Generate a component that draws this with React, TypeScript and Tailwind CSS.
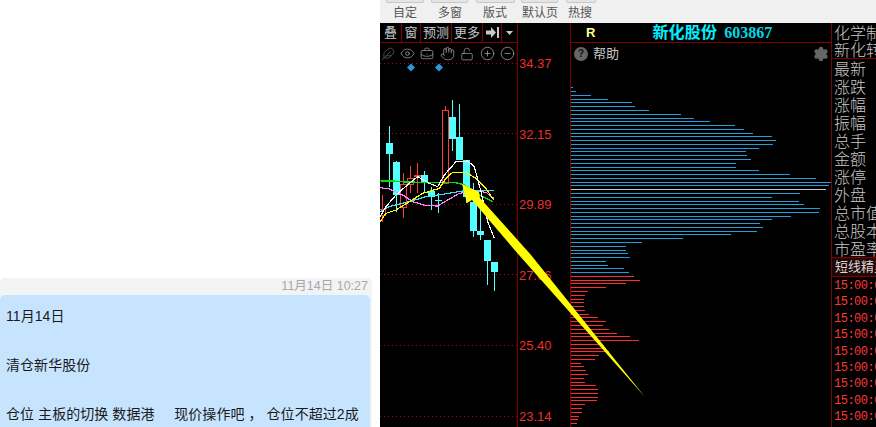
import { Feather, Eye, BriefcaseBusiness, Hand, LockOpen, CirclePlus, CircleMinus, Settings } from 'lucide-react'

const CJK = "font-['Liberation_Sans','Noto_Sans_CJK_SC',sans-serif]"

type Candle = [number, number, number, number, number, 'c' | 'r' | 'f']

// all chart numbers below were read off a 3x crop, z() maps them back to page pixels
const zx = (x: number) => x / 3 + 376
const zy = (y: number) => y / 3 + 95
const pts = (list: number[][]) => list.map(([x, y]) => `${zx(x)},${zy(y)}`).join(' ')

const CANDLES: Candle[] = [
  [17, 300, 380, 343, 362, 'r'],
  [40, 93, 275, 144, 176, 'c'],
  [61, 198, 350, 201, 300, 'c'],
  [82, 235, 368, 268, 338, 'r'],
  [103, 213, 293, 250, 268, 'r'],
  [124, 205, 293, 240, 245, 'f'],
  [145, 228, 295, 240, 265, 'c'],
  [166, 275, 345, 287, 305, 'c'],
  [187, 295, 353, 315, 318, 'c'],
  [208, 33, 268, 45, 265, 'r'],
  [229, 15, 168, 66, 132, 'c'],
  [250, 27, 195, 126, 195, 'c'],
  [271, 195, 325, 195, 305, 'c'],
  [292, 265, 425, 320, 408, 'c'],
  [313, 340, 435, 408, 420, 'c'],
  [334, 435, 570, 435, 498, 'c'],
  [355, 500, 588, 501, 531, 'c'],
]

const LINES: { color: string; p: number[][] }[] = [
  { color: '#ff80ff', p: [[12, 278], [40, 282], [80, 300], [110, 320], [150, 332], [185, 333], [210, 318], [250, 295], [300, 288], [330, 292], [353, 310]] },
  { color: '#00e000', p: [[12, 257], [60, 259], [120, 262], [200, 263], [240, 263], [265, 270], [300, 295], [350, 320]] },
  { color: '#40e0f0', p: [[12, 350], [40, 335], [100, 320], [150, 305], [200, 298], [260, 288], [355, 286]] },
  { color: '#ffff00', p: [[12, 380], [30, 355], [60, 345], [100, 320], [140, 295], [190, 280], [210, 250], [230, 232], [270, 232], [300, 250], [330, 280], [353, 315]] },
  { color: '#ffffff', p: [[12, 365], [30, 335], [60, 300], [100, 265], [125, 245], [160, 265], [185, 275], [205, 240], [240, 200], [275, 198], [295, 215], [315, 290], [335, 380], [355, 430]] },
]

const GRID = [63, 133, 204, 274, 345, 416]
const PRICES = ['34.37', '32.15', '29.89', '27.66', '25.40', '23.14']

// [y in crop, bar end x in crop]
const BLUE = [[22, 21], [34, 30], [46, 75], [58, 126], [67, 198], [79, 207], [91, 249], [103, 345], [115, 384], [124, 432], [136, 507], [148, 534], [160, 561], [169, 618], [181, 630], [193, 621], [205, 579], [214, 540], [226, 543], [238, 555], [250, 510], [262, 510], [271, 579], [283, 672], [295, 750], [307, 795], [316, 789], [328, 780], [340, 702], [352, 618], [364, 699], [373, 714], [385, 762], [397, 759], [409, 675], [418, 618], [430, 582], [442, 591], [454, 573], [463, 495], [475, 351], [487, 228], [499, 180], [511, 180], [520, 186], [532, 192]]
const LOWER_BLUE = [[7, 390], [19, 318], [31, 324], [40, 372], [52, 387]]
const RED = [[64, 402], [76, 420], [85, 378], [97, 318], [109, 264], [121, 255], [133, 252], [142, 252], [154, 252], [166, 255], [178, 267], [187, 294], [199, 318], [211, 309], [223, 327], [235, 351], [244, 390], [256, 417], [268, 309], [280, 312], [289, 327], [301, 297], [313, 285], [325, 243], [334, 252], [346, 258], [358, 264], [370, 252], [382, 255], [391, 288], [403, 294], [415, 294], [427, 294], [436, 291], [448, 255], [460, 246], [472, 246], [484, 237], [493, 234], [505, 231]]

const BARS = [
  ...BLUE.map(([y, x]) => ({ y: Math.round(y / 3 + 80), x1: x / 3 + 566, color: y === 328 ? '#c8c8c8' : '#1f9fd8' })),
  ...LOWER_BLUE.map(([y, x]) => ({ y: Math.round(y / 3 + 255), x1: x / 3 + 500, color: '#1f9fd8' })),
  ...RED.map(([y, x]) => ({ y: Math.round(y / 3 + 255), x1: x / 3 + 500, color: '#ff2d2d' })),
]

const INFO_TOP = ['化学制品', '新化转债']
const INFO = ['最新', '涨跌', '涨幅', '振幅', '总手', '金额', '涨停', '外盘', '总市值', '总股本', '市盈率']

function PlotChart() {
  return (
    <svg className="block w-[137px] h-[364px]" viewBox="380 63 137 364" shapeRendering="crispEdges">
      {GRID.map(y => (
        <line key={y} x1={380} x2={517} y1={y + 0.5} y2={y + 0.5} stroke="#c00000" strokeDasharray="1 3" />
      ))}
      <path d="M411 63.5l4 4-4 4-4-4zM439 63.5l4 4-4 4-4-4z" fill="#2a9ad0" shapeRendering="auto" />
      {CANDLES.map(([x, top, bottom, bodyTop, bodyBottom, kind]) => {
        const cx = Math.round(zx(x)) + 0.5
        const color = kind === 'c' ? '#54ffff' : '#ff3c3c'
        return (
          <g key={x}>
            <line x1={cx} x2={cx} y1={zy(top)} y2={zy(bottom)} stroke={color} />
            {kind === 'r' ? (
              <rect x={cx - 3} y={Math.round(zy(bodyTop)) + 0.5} width={6} height={Math.round((bodyBottom - bodyTop) / 3)} fill="#000" stroke={color} />
            ) : (
              <rect x={cx - 3.5} y={Math.round(zy(bodyTop))} width={7} height={Math.max(1, Math.round((bodyBottom - bodyTop) / 3))} fill={color} />
            )}
          </g>
        )
      })}
      {LINES.map(l => (
        <polyline key={l.color} points={pts(l.p)} fill="none" stroke={l.color} strokeWidth={l.color === '#00e000' ? 1.6 : 1.2} />
      ))}
    </svg>
  )
}

function ProfileBars() {
  return (
    <svg className="block w-[260px] h-[364px]" viewBox="571 63 260 364" shapeRendering="crispEdges">
      {BARS.map((b, i) => (
        <line key={i} x1={571} x2={b.x1} y1={b.y + 0.5} y2={b.y + 0.5} stroke={b.color} />
      ))}
    </svg>
  )
}

function TopStub({ w, ml }: { w: string; ml: string }) {
  return <div className={`h-[3px] ${w} ${ml} bg-[#e4e4e4] border-b border-x border-[#c8c8c8] rounded-b-[2px]`} />
}

export default function App() {
  return (
    <div className={`relative flex w-[876px] h-[427px] overflow-hidden bg-white ${CJK}`}>
      {/* chat column */}
      <div className="w-[380px] shrink-0 flex flex-col justify-end">
        <div className="w-[372px] h-[149px] bg-[#f2f3f5] rounded-t-[5px] pr-[2px] flex flex-col">
          <div className="h-[17px] leading-[17px] text-right text-[12.5px] text-[#a8a8a8] pr-[2px]">11月14日 10:27</div>
          <div className="flex-1 bg-[#c7e4ff] rounded-t-[5px] pl-[6px] pt-[9px] text-[14px] leading-[24.4px] text-[#1a1a1a] whitespace-pre tracking-[0.06px]">
            <p>11月14日</p>
            <p>&nbsp;</p>
            <p>清仓新华股份</p>
            <p>&nbsp;</p>
            <p>仓位 主板的切换 数据港     现价操作吧 ， 仓位不超过2成</p>
          </div>
        </div>
      </div>

      {/* trading software window */}
      <div className="flex-1 flex flex-col min-w-0">
        <div className="h-[23px] bg-[#f0f0f0] relative shrink-0">
          <div className="flex">
            <TopStub w="w-[38px]" ml="ml-[6px]" />
            <TopStub w="w-[37px]" ml="ml-[7px]" />
            <TopStub w="w-[39px]" ml="ml-[8px]" />
            <TopStub w="w-[37px]" ml="ml-[6px]" />
            <TopStub w="w-[30px]" ml="ml-[8px]" />
          </div>
          <div className="flex text-[12px] leading-[16px] text-[#555] pt-[2px]">
            <span className="ml-[13px]">自定</span>
            <span className="ml-[21px]">多窗</span>
            <span className="ml-[21px]">版式</span>
            <span className="ml-[15px]">默认页</span>
            <span className="ml-[10px]">热搜</span>
          </div>
        </div>

        <div className="flex-1 flex bg-black min-h-0">
          <div className="w-[137px] shrink-0 flex flex-col">
            <div className="h-[20px] flex border-b border-[#800000] text-[13px] leading-[19px] text-[#c4c4c4] text-center">
              <span className="w-[22px] border-r border-[#800000]">叠</span>
              <span className="w-[19px] border-r border-[#800000]">窗</span>
              <span className="w-[31px] border-r border-[#800000]">预测</span>
              <span className="w-[31px] border-r border-[#800000]">更多</span>
              <span className="w-[19px] border-r border-[#800000] flex items-center justify-center">
                <svg width="13" height="11" viewBox="0 0 13 11">
                  <path d="M0 3.500h5V0l5 5.500-5 5.500V7.500H0zM11 0h2v11h-2z" fill="#c8c8c8" />
                </svg>
              </span>
              <span className="flex-1 flex items-center justify-center">
                <svg width="7" height="4" viewBox="0 0 7 4"><path d="M0 0h7L3.500 4z" fill="#c8c8c8" /></svg>
              </span>
            </div>
            <div className="h-[20px] flex items-center text-[#a8a8a8] pt-[1px]">
              <Feather className="w-[14px] h-[14px] ml-[1px] text-[#555]" strokeWidth={1.5} />
              <Eye className="w-[15px] h-[15px] ml-[5px]" strokeWidth={1.2} />
              <BriefcaseBusiness className="w-[14px] h-[14px] ml-[5px]" strokeWidth={1.2} />
              <Hand className="w-[15px] h-[15px] ml-[6px]" strokeWidth={1.2} />
              <LockOpen className="w-[14px] h-[14px] ml-[5px]" strokeWidth={1.2} />
              <CirclePlus className="w-[15px] h-[15px] ml-[6px]" strokeWidth={1.2} />
              <CircleMinus className="w-[15px] h-[15px] ml-[5px]" strokeWidth={1.2} />
            </div>
            <PlotChart />
          </div>

          <div className="w-[53px] shrink-0 border-l border-[#800000] flex flex-col justify-between pt-[34px] pb-[3px] pl-[1px] text-[13px] leading-[14px] text-[#e8302c]">
            {PRICES.map(p => (
              <span key={p}>{p}</span>
            ))}
          </div>

          <div className="w-[261px] shrink-0 border-l border-[#800000] flex flex-col">
            <div className="h-[20px] flex items-center border-b border-[#800000]">
              <span className="ml-[15px] text-[#ffff80] text-[13px] font-bold">R</span>
              <span className="ml-[57px] text-[#00f0ff] text-[16px] font-bold leading-[19px] tracking-[0.2px]">新化股份</span>
              <span className="ml-[7px] text-[#00d8e8] text-[16px] font-bold leading-[19px] font-['Liberation_Serif',serif]">603867</span>
            </div>
            <div className="h-[20px] flex items-center pl-[3px] pr-[2px] pt-[2px]">
              <span className="w-[14px] h-[14px] rounded-full bg-[#666] text-[#111] text-[10px] leading-[14px] font-bold text-center">?</span>
              <span className="ml-[5px] text-[13px] text-[#c8c8c8]">帮助</span>
              <Settings className="ml-auto w-[16px] h-[16px] text-[#666] fill-[#666]" strokeWidth={2} />
            </div>
            <ProfileBars />
          </div>

          <div className="flex-1 min-w-0 border-l border-[#800000] flex flex-col overflow-hidden whitespace-nowrap text-[#c8c8c8] text-[16px] leading-[18px] font-light">
            <div className="border-b border-[#800000] h-[36px] pl-[2px] pt-[2px]">
              {INFO_TOP.map(t => (
                <div key={t} className="h-[17px]">{t}</div>
              ))}
            </div>
            <div className="h-[198px] pl-[2px] pt-[2px]">
              {INFO.map(t => (
                <div key={t} className="h-[18px]">{t}</div>
              ))}
            </div>
            <div className="h-[20px] bg-[#230606] border-y border-[#800000] pl-[3px] text-[13px] leading-[18px] text-[#d8d8d8] font-normal">短线精灵</div>
            <div className="pl-[2px] pt-[1px] text-[12px] leading-[16.4px] text-[#ff3838] font-normal font-['Liberation_Mono',monospace] tracking-[-0.5px]">
              {Array.from({ length: 9 }, (_, i) => (
                <div key={i}>15:00:00</div>
              ))}
            </div>
          </div>
        </div>
      </div>

      {/* yellow annotation arrow lies over the chart */}
      <svg className="absolute left-0 top-0 pointer-events-none" width="876" height="427" viewBox="0 0 876 427">
        <polygon points="462,184 479,192 480,198 531,255 645,397 519,255 472,200 467,203" fill="#ffff00" />
      </svg>
    </div>
  )
}
